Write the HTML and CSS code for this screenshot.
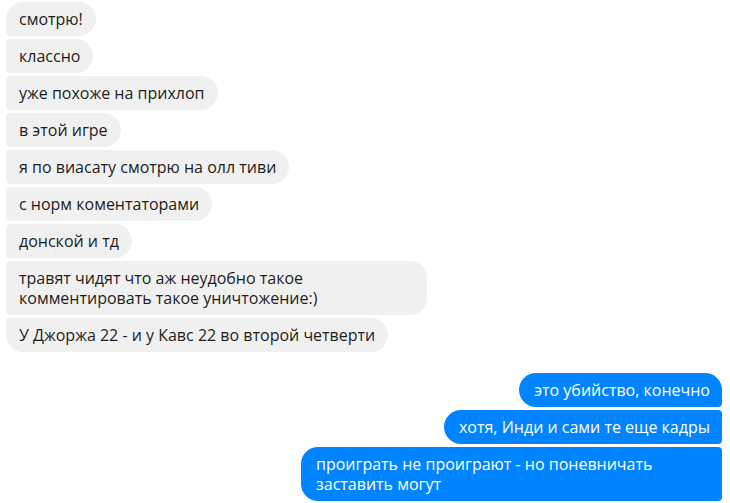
FILE: index.html
```html
<!DOCTYPE html>
<html lang="ru">
<head>
<meta charset="utf-8">
<link rel="stylesheet" href="styles.css">
</head>
<body>
<div class="chat">
  <div class="group them">
    <div class="msg first">смотрю!</div>
    <div class="msg">классно</div>
    <div class="msg">уже похоже на прихлоп</div>
    <div class="msg">в этой игре</div>
    <div class="msg">я по виасату смотрю на олл тиви</div>
    <div class="msg">с норм коментаторами</div>
    <div class="msg">донской и тд</div>
    <div class="msg full">травят чидят что аж неудобно такое<br>комментировать такое уничтожение:)</div>
    <div class="msg last">У Джоржа 22 - и у Кавс 22 во второй четверти</div>
  </div>
  <div class="group me">
    <div class="msg first">это убийство, конечно</div>
    <div class="msg">хотя, Инди и сами те еще кадры</div>
    <div class="msg full">проиграть не проиграют - но поневничать<br>заставить могут</div>
  </div>
</div>
</body>
</html>
```

FILE: styles.css
```css
html, body {
  margin: 0;
  padding: 0;
  background: #ffffff;
}
.chat {
  padding: 2px 8px 0 6px;
  font-family: "Open Sans", "Noto Sans", sans-serif;
  font-size: 16px;
}
.group {
  display: flex;
  flex-direction: column;
  gap: 3px;
}
.them {
  align-items: flex-start;
}
.me {
  align-items: flex-end;
  margin-top: 21px;
}
.msg {
  box-sizing: border-box;
  padding: 7px 13px;
  line-height: 20px;
  border-radius: 4px 17px 17px 4px;
  max-width: 421px;
  white-space: nowrap;
}
.them .msg {
  background: #f1f0f0;
  color: #1c1e21;
}
.them .msg.first {
  border-top-left-radius: 17px;
}
.them .msg.last {
  border-bottom-left-radius: 17px;
}
.me .msg {
  background: #0084ff;
  color: #ffffff;
  border-radius: 17px 4px 4px 17px;
  padding: 7px 12px 7px 15px;
}
.me .msg.first {
  border-top-right-radius: 17px;
}
.msg.full {
  width: 421px;
}
```
